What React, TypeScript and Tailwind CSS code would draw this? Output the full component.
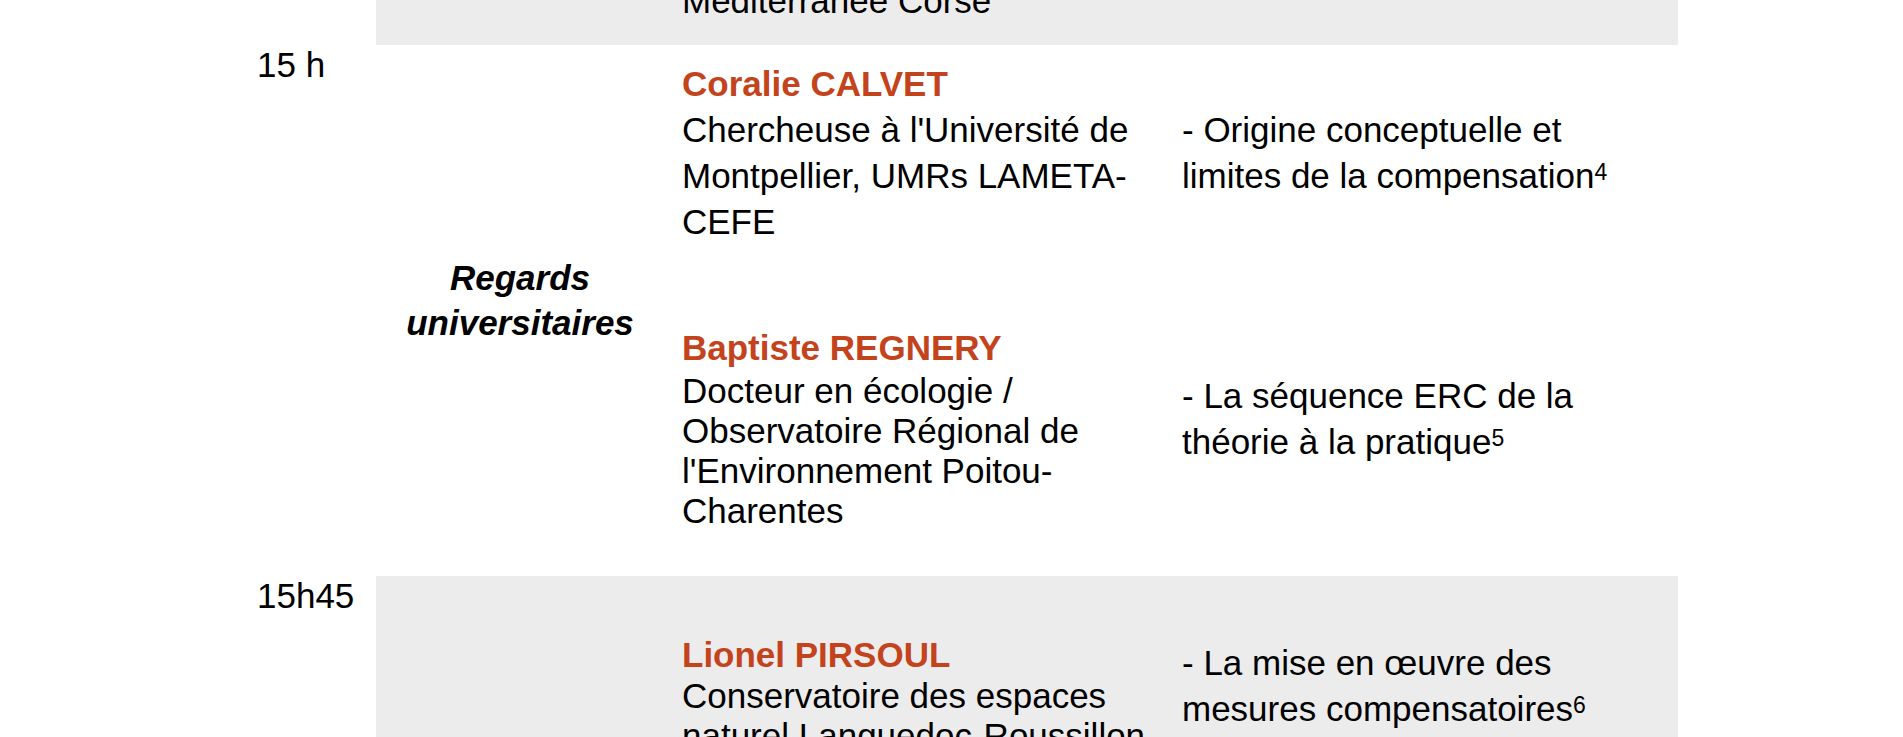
const grey = "bg-[#ececec]";
const nameCls = "font-bold text-[#c3431c] leading-[46px]";

function Sup({ n }: { n: string }) {
  return <sup className="text-[23px] leading-none align-baseline relative -top-[8px]">{n}</sup>;
}

export default function App() {
  return (
    <div className="h-[737px] w-full overflow-hidden bg-white text-black text-[35px] font-['Liberation_Sans',Arial,sans-serif]">
      {/* previous row, cut off at the top */}
      <div className="grid grid-cols-[376px_284px_500px_518px] h-[45px] overflow-hidden">
        <div />
        <div className={grey} />
        <div className={`${grey} pl-[22px]`}>
          <div className="-mt-[22px] leading-[46px]">Méditerranée Corse</div>
        </div>
        <div className={grey} />
      </div>

      {/* 15 h */}
      <div className="grid grid-cols-[376px_284px_500px_518px] grid-rows-[280px_251px]">
        <div className="row-span-2 pl-[257px] leading-[40px]">15 h</div>
        <div className="row-span-2 pt-[210px] text-center font-bold italic leading-[45px] pl-[4px]">
          Regards
          <br />
          universitaires
        </div>
        <div className="pl-[22px] pt-[16px]">
          <div className={nameCls}>Coralie CALVET</div>
          <div className="leading-[46px]">
            Chercheuse à l'Université de
            <br />
            Montpellier, UMRs LAMETA-
            <br />
            CEFE
          </div>
        </div>
        <div className="pl-[22px] pt-[62px] leading-[46px]">
          - Origine conceptuelle et
          <br />
          limites de la compensation
          <Sup n="4" />
        </div>
        <div className="pl-[22px]">
          <div className={nameCls}>Baptiste REGNERY</div>
          <div className="leading-[40px]">
            Docteur en écologie /
            <br />
            Observatoire Régional de
            <br />
            l'Environnement Poitou-
            <br />
            Charentes
          </div>
        </div>
        <div className="pl-[22px] pt-[48px] leading-[46px]">
          - La séquence ERC de la
          <br />
          théorie à la pratique
          <Sup n="5" />
        </div>
      </div>

      {/* 15h45 */}
      <div className="grid grid-cols-[376px_284px_500px_518px] h-[200px]">
        <div className="pl-[257px] leading-[40px]">15h45</div>
        <div className={grey} />
        <div className={`${grey} pl-[22px] pt-[56px]`}>
          <div className={nameCls}>Lionel PIRSOUL</div>
          <div className="-mt-[2px] leading-[40px] whitespace-nowrap">
            Conservatoire des espaces
            <br />
            naturel Languedoc-Roussillon
          </div>
        </div>
        <div className={`${grey} pl-[22px] pt-[64px] leading-[46px]`}>
          - La mise en œuvre des
          <br />
          mesures compensatoires
          <Sup n="6" />
        </div>
      </div>
    </div>
  );
}
